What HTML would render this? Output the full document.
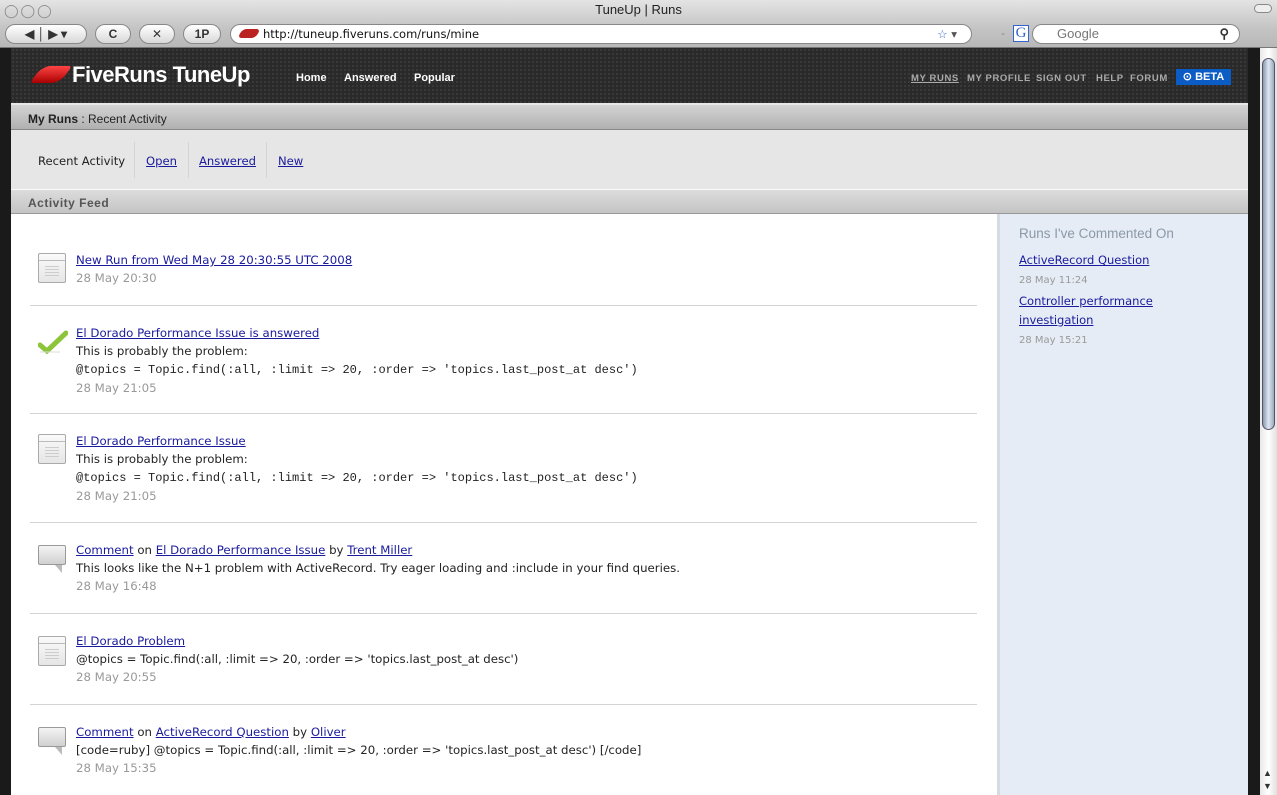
<!DOCTYPE html>
<html><head><meta charset="utf-8"><style>
*{margin:0;padding:0;box-sizing:border-box}
body{width:1277px;height:795px;overflow:hidden;background:#1a1a1a;font-family:"Liberation Sans",sans-serif;position:relative}
.abs{position:absolute}
a{color:#1a1a9c;text-decoration:underline}
.chrome{left:0;top:0;width:1277px;height:48px;background:linear-gradient(#e4e4e4,#c4c4c4 60%,#b8b8b8);border-bottom:1px solid #777}
.title{left:0;top:2px;width:1277px;text-align:center;font-size:13px;color:#222}
.btn{top:24px;height:20px;border:1px solid #888;border-radius:10px;background:linear-gradient(#fff,#d8d8d8);font-size:12px;color:#333;text-align:center;line-height:18px;font-weight:bold}
.url{left:230px;top:24px;width:742px;height:20px;border:1px solid #888;border-radius:10px;background:#fff;line-height:18px;padding-left:32px;color:#111;font-family:"DejaVu Sans",sans-serif;font-size:11.5px}
.search{left:1032px;top:24px;width:208px;height:20px;border:1px solid #888;border-radius:10px;background:#fff;font-size:13px;line-height:18px;padding-left:24px;color:#777}
.hdr{left:11px;top:48px;width:1237px;height:55px;background:#2a2a2a;background-image:radial-gradient(#3a3a3a 1px,transparent 1.2px);background-size:4px 4px}
.logo{left:72px;top:62px;color:#fff;font-size:22px;font-weight:bold;letter-spacing:-0.5px}
.nav{top:72px;color:#fff;font-size:11px;font-weight:bold}
.rnav{top:73px;color:#aaa;font-size:9.5px;font-weight:bold;letter-spacing:0.6px}
.crumb{left:11px;top:103px;width:1237px;height:27px;background:linear-gradient(#d4d4d4,#b0b0b0);border-top:2px solid #e8e8e8;border-bottom:1px solid #888;font-size:12px;color:#222;padding:7px 0 0 17px}
.tabs{left:11px;top:130px;width:1237px;height:60px;background:#e6e6e6;border-bottom:1px solid #fafafa;font-family:"DejaVu Sans",sans-serif}
.tabs span{position:absolute;top:24px;font-size:11.6px}
.feedbar{left:11px;top:190px;width:1237px;height:24px;background:linear-gradient(#dcdcdc,#c4c4c4);border-bottom:1px solid #999;font-size:12px;font-weight:bold;color:#555;padding:6px 0 0 17px;letter-spacing:0.5px}
.main{left:11px;top:214px;width:986px;height:581px;background:#fff}
.side{left:997px;top:214px;width:251px;height:581px;background:#e5ecf5;border-left:3px solid #d6dbe2}
.item{left:76px;font-size:11.75px;line-height:18px;color:#222;font-family:"DejaVu Sans",sans-serif;white-space:nowrap}
.date{color:#999}
.mono{font-family:"Liberation Mono",monospace;font-size:12px}
.sep{left:30px;width:947px;height:1px;background:#d4d4d4}
.ic{left:38px;width:28px;height:30px;border:1px solid #aaa;border-radius:2px;background:linear-gradient(#fafafa,#e6e6e6)}
.ic::before{content:"";position:absolute;left:0;right:0;top:6px;border-top:1px solid #bbb}
.ic::after{content:"";position:absolute;left:6px;right:6px;top:12px;height:10px;background:repeating-linear-gradient(#ccc 0 1px,transparent 1px 3px)}
.cm{left:38px;width:28px;height:20px;border:1px solid #999;border-radius:2px;background:linear-gradient(#f4f4f4,#d0d0d0)}
.cm::after{content:"";position:absolute;left:16px;top:19px;border-left:7px solid transparent;border-top:8px solid #bbb}
.scroll{left:1260px;top:48px;width:17px;height:747px;background:linear-gradient(90deg,#e8e8e8,#fff,#e0e0e0)}
.thumb{left:1262px;top:58px;width:13px;height:372px;border:1px solid #556;border-radius:7px;background:linear-gradient(90deg,#8a98ad,#dfe8f4,#9aa8bd)}
.sd{font-family:"DejaVu Sans",sans-serif}
</style></head><body>
<div class="abs chrome"></div>
<div class="abs title">TuneUp | Runs</div>
<div class="abs" style="left:4px;top:3px;font-size:13px;color:#888;letter-spacing:2px">◯◯◯</div>
<div class="abs" style="left:1254px;top:4px;width:18px;height:9px;border:1px solid #888;border-radius:5px;background:#eee"></div>
<div class="abs btn" style="left:5px;width:82px">◀ │ ▶ ▾</div>
<div class="abs btn" style="left:95px;width:36px">C</div>
<div class="abs btn" style="left:139px;width:36px;font-weight:normal">✕</div>
<div class="abs btn" style="left:183px;width:38px">1P</div>
<div class="abs url">http://tuneup.fiveruns.com/runs/mine<span style="position:absolute;right:14px;color:#3366cc">☆ <span style="color:#555">▾</span></span></div>
<div class="abs" style="left:240px;top:29px;width:18px;height:9px;background:#b22;border-radius:4px;transform:skewX(-30deg)"></div>
<div class="abs" style="left:1001px;top:26px;color:#888;font-size:12px">-</div>
<div class="abs" style="left:1013px;top:25px;width:16px;height:17px;border:1px solid #36c;background:#fff;color:#36c;font-family:'Liberation Serif',serif;font-size:15px;line-height:15px;text-align:center">G</div>
<div class="abs search">Google<span style="position:absolute;right:10px;color:#333;font-weight:bold">⚲</span></div>
<div class="abs hdr"></div>
<div class="abs" style="left:36px;top:66px;width:30px;height:17px;background:linear-gradient(#f44,#a00);border-radius:9px 3px 9px 3px;transform:skewX(-35deg)"></div>
<div class="abs logo">FiveRuns TuneUp</div>
<div class="abs nav" style="left:296px">Home</div>
<div class="abs nav" style="left:344px">Answered</div>
<div class="abs nav" style="left:414px">Popular</div>
<div class="abs rnav" style="left:911px;text-decoration:underline">MY RUNS</div>
<div class="abs rnav" style="left:967px">MY PROFILE</div>
<div class="abs rnav" style="left:1036px">SIGN OUT</div>
<div class="abs rnav" style="left:1096px">HELP</div>
<div class="abs rnav" style="left:1130px">FORUM</div>
<div class="abs" style="left:1176px;top:69px;width:55px;height:16px;background:#0b5cc4;color:#fff;font-size:11px;font-weight:bold;line-height:16px;text-align:center">⊙ BETA</div>
<div class="abs crumb"><b>My Runs</b> : Recent Activity</div>
<div class="abs tabs">
<span style="left:27px;color:#222">Recent Activity</span>
<span style="left:123px;top:12px;height:36px;border-left:1px solid #d4d4d4"></span>
<span style="left:135px"><a href="#">Open</a></span>
<span style="left:177px;top:12px;height:36px;border-left:1px solid #d4d4d4"></span>
<span style="left:188px"><a href="#">Answered</a></span>
<span style="left:255px;top:12px;height:36px;border-left:1px solid #d4d4d4"></span>
<span style="left:267px"><a href="#">New</a></span>
</div>
<div class="abs feedbar">Activity Feed</div>
<div class="abs main"></div>
<div class="abs side"></div>
<div class="abs" style="left:1019px;top:226px;font-size:13.5px;color:#8b99a8">Runs I've Commented On</div>
<div class="abs sd" style="left:1019px;top:251px;font-size:11.5px;line-height:19px"><a href="#">ActiveRecord Question</a><br><span style="font-size:10px;color:#999;line-height:16px">28 May 11:24</span></div>
<div class="abs sd" style="left:1019px;top:292px;font-size:11.5px;line-height:19px"><a href="#">Controller performance<br>investigation</a><br><span style="font-size:10px;color:#999;line-height:14px">28 May 15:21</span></div>

<div class="abs ic" style="top:253px"></div>
<div class="abs item" style="top:251px"><a href="#">New Run from Wed May 28 20:30:55 UTC 2008</a><br><span class="date">28 May 20:30</span></div>
<div class="abs sep" style="top:305px"></div>

<svg class="abs" style="left:38px;top:330px" width="30" height="24"><path d="M2 15 L9 21 L28 3" stroke="#8cc43a" stroke-width="5" fill="none" stroke-linecap="round"/><path d="M2 22 H22" stroke="#ddd" stroke-width="1"/></svg>
<div class="abs item" style="top:324px"><a href="#">El Dorado Performance Issue is answered</a><br>This is probably the problem:<br><span class="mono">@topics = Topic.find(:all, :limit =&gt; 20, :order =&gt; 'topics.last_post_at desc')</span><br><span class="date">28 May 21:05</span></div>
<div class="abs sep" style="top:413px"></div>

<div class="abs ic" style="top:434px"></div>
<div class="abs item" style="top:432px"><a href="#">El Dorado Performance Issue</a><br>This is probably the problem:<br><span class="mono">@topics = Topic.find(:all, :limit =&gt; 20, :order =&gt; 'topics.last_post_at desc')</span><br><span class="date">28 May 21:05</span></div>
<div class="abs sep" style="top:522px"></div>

<div class="abs cm" style="top:545px"></div>
<div class="abs item" style="top:541px"><a href="#">Comment</a> on <a href="#">El Dorado Performance Issue</a> by <a href="#">Trent Miller</a><br>This looks like the N+1 problem with ActiveRecord. Try eager loading and :include in your find queries.<br><span class="date">28 May 16:48</span></div>
<div class="abs sep" style="top:613px"></div>

<div class="abs ic" style="top:636px"></div>
<div class="abs item" style="top:632px"><a href="#">El Dorado Problem</a><br>@topics = Topic.find(:all, :limit =&gt; 20, :order =&gt; 'topics.last_post_at desc')<br><span class="date">28 May 20:55</span></div>
<div class="abs sep" style="top:704px"></div>

<div class="abs cm" style="top:727px"></div>
<div class="abs item" style="top:723px"><a href="#">Comment</a> on <a href="#">ActiveRecord Question</a> by <a href="#">Oliver</a><br>[code=ruby] @topics = Topic.find(:all, :limit =&gt; 20, :order =&gt; 'topics.last_post_at desc') [/code]<br><span class="date">28 May 15:35</span></div>

<div class="abs scroll"></div>
<div class="abs thumb"></div>
<div class="abs" style="left:1263px;top:768px;font-size:9px;color:#333">▲</div>
<div class="abs" style="left:1263px;top:781px;font-size:9px;color:#333">▼</div>
</body></html>
